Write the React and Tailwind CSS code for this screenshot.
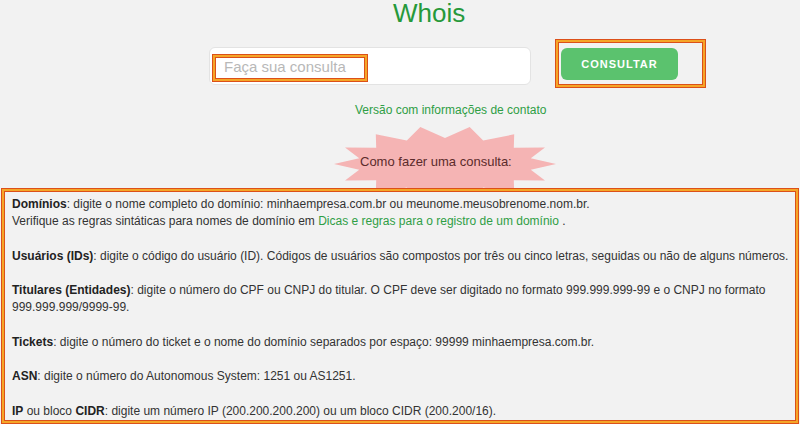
import React from 'react';

const hl = 'border border-[#dc5019] shadow-[inset_0_0_0_2px_#f5a628,inset_0_0_0_3px_#dc5019]';

function starPoints(n, rx, ry, irx, iry) {
  const pts = [];
  for (let i = 0; i < n * 2; i++) {
    const a = (i * Math.PI) / n;
    const outer = i % 2 === 0;
    const x = rx + Math.cos(a) * (outer ? rx : irx);
    const y = ry + Math.sin(a) * (outer ? ry : iry);
    pts.push(`${x.toFixed(1)},${y.toFixed(1)}`);
  }
  return pts.join(' ');
}

const Starburst = () => (
  <div className="relative ml-[334px] mt-[7px] h-[62px] w-[222px]">
    <svg className="absolute left-0 top-0 overflow-visible" width="222" height="76" viewBox="0 0 222 76">
      <polygon points={starPoints(14, 111, 38, 88, 26)} fill="#f5b4b4" />
    </svg>
    <p className="relative pl-[26px] pt-[27px] text-[13px] leading-[17px] text-[#5b2b2b]">Como fazer uma consulta:</p>
  </div>
);

const B = ({ children }) => <b className="font-bold text-[#222]">{children}</b>;

export default function App() {
  return (
    <div className="h-[424px] w-[800px] overflow-hidden bg-[#f2f2f2] font-['Liberation_Sans',Arial,sans-serif]">
      <h1 className="ml-[393px] mt-[-3px] text-[26px] leading-[32px] text-[#26993a]">Whois</h1>

      <div className="mt-[10px] flex items-start pl-[209px]">
        <div className="mt-[8px] flex h-[38px] w-[322px] items-center rounded-md border border-[#e3e3e3] bg-white pl-[2px] pt-[3px]">
          <div className={`flex h-[28px] w-[156px] items-center ${hl}`}>
            <input
              className="w-full bg-transparent pl-[11px] text-[15px] text-[#555] outline-none placeholder:text-[#b8b8b8]"
              placeholder="Faça sua consulta"
            />
          </div>
        </div>
        <div className={`ml-[24px] h-[49px] w-[151px] pl-[5px] pt-[8px] ${hl}`}>
          <button className="h-[32px] w-[117px] rounded-md bg-[#5bc26e] text-[11px] font-bold tracking-[1px] text-white">
            CONSULTAR
          </button>
        </div>
      </div>

      <p className="ml-[355px] mt-[14px] text-[12px] leading-[17px] text-[#2f9e45]">Versão com informações de contato</p>

      <Starburst />

      <div className={`relative mx-[1px] h-[236px] overflow-hidden bg-[#f2f2f2] pl-[10px] pt-[7px] text-[12px] leading-[17px] text-[#333] ${hl}`}>
        <p className="mb-[17.5px]">
          <B>Domínios</B>: digite o nome completo do domínio: minhaempresa.com.br ou meunome.meusobrenome.nom.br.
          <br />
          Verifique as regras sintáticas para nomes de domínio em{' '}
          <span className="text-[#2f9e45]">Dicas e regras para o registro de um domínio</span> .
        </p>
        <p className="mb-[17.5px] whitespace-nowrap">
          <B>Usuários (IDs)</B>: digite o código do usuário (ID). Códigos de usuários são compostos por três ou cinco letras, seguidas ou não de alguns números.
        </p>
        <p className="mb-[17.5px] pr-[10px]">
          <B>Titulares (Entidades)</B>: digite o número do CPF ou CNPJ do titular. O CPF deve ser digitado no formato 999.999.999-99 e o CNPJ no formato 999.999.999/9999-99.
        </p>
        <p className="mb-[17.5px]">
          <B>Tickets</B>: digite o número do ticket e o nome do domínio separados por espaço: 99999 minhaempresa.com.br.
        </p>
        <p className="mb-[17.5px]">
          <B>ASN</B>: digite o número do Autonomous System: 1251 ou AS1251.
        </p>
        <p>
          <B>IP</B> ou bloco <B>CIDR</B>: digite um número IP (200.200.200.200) ou um bloco CIDR (200.200/16).
        </p>
      </div>
    </div>
  );
}
